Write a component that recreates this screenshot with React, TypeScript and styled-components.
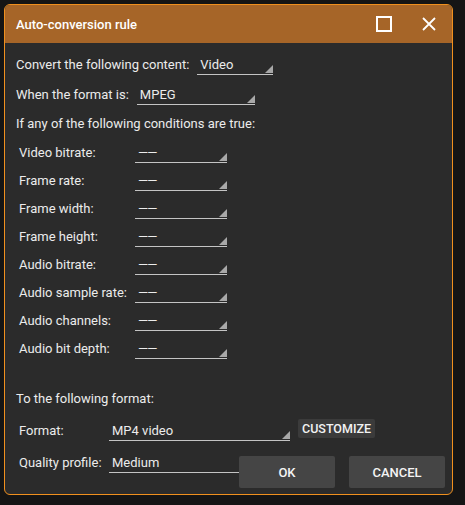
import React from "react";
import styled, { createGlobalStyle } from "styled-components";

const GlobalStyle = createGlobalStyle`
  html, body {
    margin: 0;
    padding: 0;
    background: #151515;
  }
  body {
    font-family: Roboto, "Liberation Sans", Arial, sans-serif;
    font-size: 13px;
    color: #ececec;
  }
`;

const conditions = [
  "Video bitrate:",
  "Frame rate:",
  "Frame width:",
  "Frame height:",
  "Audio bitrate:",
  "Audio sample rate:",
  "Audio channels:",
  "Audio bit depth:",
];

const App = () => {
  return (
    <>
      <GlobalStyle />
      <Page>
        <Dialog>
          <TitleBar>
            <Title>Auto-conversion rule</Title>
            <TitleButtons>
              <IconBtn aria-label="maximize">
                <svg width="16" height="16" viewBox="0 0 16 16">
                  <rect x="1" y="1" width="14" height="14" fill="none" stroke="#fff" strokeWidth="2" />
                </svg>
              </IconBtn>
              <IconBtn aria-label="close">
                <svg width="16" height="16" viewBox="0 0 16 16">
                  <path d="M2 2 L14 14 M14 2 L2 14" stroke="#fff" strokeWidth="1.8" />
                </svg>
              </IconBtn>
            </TitleButtons>
          </TitleBar>
          <Body>
            <TopRow>
              <span>Convert the following content:</span>
              <Select $width={76}>Video</Select>
            </TopRow>
            <TopRow>
              <span>When the format is:</span>
              <Select $width={118}>MPEG</Select>
            </TopRow>
            <IntroRow>If any of the following conditions are true:</IntroRow>
            <Conditions>
              {conditions.map((c) => (
                <Row key={c}>
                  <Label $width={116}>{c}</Label>
                  <Select $width={92}>
                    <Empty>——</Empty>
                  </Select>
                </Row>
              ))}
            </Conditions>
            <Section>To the following format:</Section>
            <Indented>
              <Row>
                <Label $width={90}>Format:</Label>
                <Select $width={181}>MP4 video</Select>
                <Customize>CUSTOMIZE</Customize>
              </Row>
              <QualityRow>
                <Label $width={90}>Quality profile:</Label>
                <Input $width={140}>Medium</Input>
              </QualityRow>
            </Indented>
          </Body>
          <Footer>
            <Button>OK</Button>
            <Button>CANCEL</Button>
          </Footer>
        </Dialog>
      </Page>
    </>
  );
};

export default App;

const Page = styled.div`
  width: 465px;
  height: 505px;
  padding: 4px 0 0 4px;
  box-sizing: border-box;
`;

const Dialog = styled.div`
  position: relative;
  width: 449px;
  height: 491px;
  box-sizing: border-box;
  border: 1px solid #f0901e;
  border-radius: 6px;
  background: #2b2b2b;
  overflow: hidden;
  display: flex;
  flex-direction: column;
`;

const TitleBar = styled.div`
  height: 38px;
  background: #a66528;
  display: flex;
  align-items: center;
  justify-content: space-between;
  padding: 0 15px 0 11px;
  flex-shrink: 0;
`;

const Title = styled.div`
  color: #fff;
  font-size: 13px;
  font-weight: 500;
`;

const TitleButtons = styled.div`
  display: flex;
  align-items: center;
  gap: 29px;
`;

const IconBtn = styled.div`
  width: 16px;
  height: 16px;
  display: flex;
`;

const Body = styled.div`
  display: flex;
  flex-direction: column;
  padding: 6px 0 0 11px;
`;

const TopRow = styled.div`
  height: 30px;
  display: flex;
  align-items: center;
  gap: 8px;
`;

const Row = styled.div`
  height: 28px;
  display: flex;
  align-items: center;
`;

const IntroRow = styled(Row)`
  height: 29px;
`;

const QualityRow = styled(Row)`
  margin-top: 1px;
`;

const Conditions = styled.div`
  display: flex;
  flex-direction: column;
  padding-left: 3px;
`;

const Section = styled(Row)`
  margin-top: 22px;
`;

const Indented = styled.div`
  display: flex;
  flex-direction: column;
  padding-left: 3px;
  margin-top: 4px;
  gap: 3px;
`;

const Label = styled.span<{ $width: number }>`
  width: ${(p) => p.$width}px;
  flex-shrink: 0;
`;

const Select = styled.div<{ $width: number }>`
  position: relative;
  width: ${(p) => p.$width}px;
  height: 19px;
  box-sizing: border-box;
  padding: 1px 0 0 3px;
  border-bottom: 1px solid #c4c4c4;
  margin-top: 2px;
  &::after {
    content: "";
    position: absolute;
    right: 0;
    bottom: 1px;
    width: 0;
    height: 0;
    border-style: solid;
    border-width: 0 0 8px 8px;
    border-color: transparent transparent #a8a8a8 transparent;
  }
`;

const Empty = styled.span`
  letter-spacing: -1px;
`;

const Input = styled(Select)`
  &::after {
    display: none;
  }
`;

const Customize = styled.div`
  margin-left: 8px;
  height: 19px;
  padding: 0 4px;
  display: flex;
  align-items: center;
  background: #3b3b3b;
  border-radius: 2px;
  font-size: 12.5px;
  font-weight: 500;
  color: #f2f2f2;
  margin-top: -4px;
`;

const Footer = styled.div`
  position: absolute;
  right: 7px;
  bottom: 6px;
  display: flex;
  gap: 14px;
`;

const Button = styled.div`
  width: 96px;
  height: 32px;
  background: #454545;
  border-radius: 2px;
  display: flex;
  align-items: center;
  justify-content: center;
  font-size: 13px;
  font-weight: 500;
  color: #f4f4f4;
`;
